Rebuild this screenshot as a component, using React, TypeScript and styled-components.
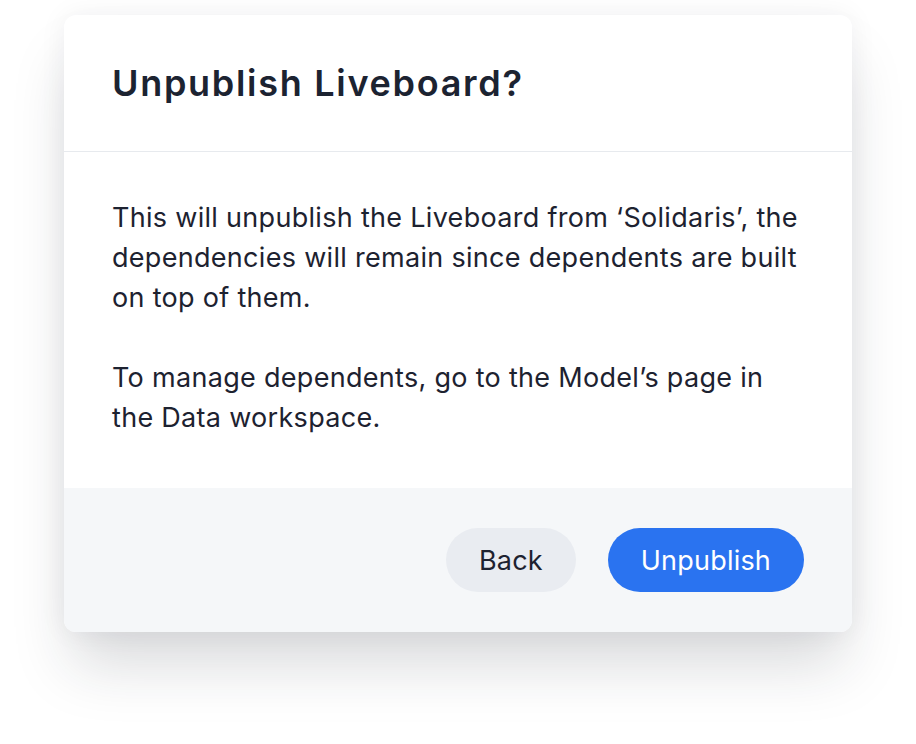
import React from "react";
import styled, { createGlobalStyle } from "styled-components";

const Global = createGlobalStyle`
  html, body { margin: 0; padding: 0; background: #ffffff; }
  body { font-family: Inter, "Noto Sans", sans-serif; -webkit-font-smoothing: antialiased; }
  * { box-sizing: border-box; }
`;

const Page = styled.div`
  width: 916px;
  height: 744px;
  padding: 15px 64px 0 64px;
  background: #ffffff;
`;

const Card = styled.div`
  width: 788px;
  background: #ffffff;
  border-radius: 12px;
  overflow: hidden;
  box-shadow: 0 40px 60px -8px rgba(30, 35, 45, 0.17), 0 0 28px rgba(30, 35, 45, 0.06);
`;

const Header = styled.div`
  height: 137px;
  padding: 0 48px;
  display: flex;
  align-items: center;
  border-bottom: 1px solid #e7eaee;
`;

const Title = styled.h1`
  margin: 0;
  font-size: 36px;
  font-weight: 600;
  color: #1c2331;
  letter-spacing: 1.7px;
`;

const Body = styled.div`
  height: 336px;
  padding: 46px 48px 0 48px;
  display: flex;
  flex-direction: column;
  gap: 40px;
`;

const Paragraph = styled.p`
  margin: 0;
  font-size: 27px;
  line-height: 40px;
  letter-spacing: 0.3px;
  color: #1d2230;
  font-weight: 400;
`;

const Footer = styled.div`
  height: 144px;
  background: #f5f7f9;
  display: flex;
  justify-content: flex-end;
  align-items: center;
  gap: 32px;
  padding: 0 48px;
`;

const Button = styled.button<{ $primary?: boolean }>`
  height: 64px;
  padding: 0 33px;
  border: none;
  border-radius: 32px;
  font-family: Inter, "Noto Sans", sans-serif;
  font-size: 27px;
  letter-spacing: 0.2px;
  font-weight: 400;
  background: ${(p) => (p.$primary ? "#2a73f0" : "#e9ecf1")};
  color: ${(p) => (p.$primary ? "#ffffff" : "#1d2230")};
  cursor: pointer;
`;

export default function App() {
  return (
    <>
      <Global />
      <Page>
        <Card>
          <Header>
            <Title>Unpublish Liveboard?</Title>
          </Header>
          <Body>
            <Paragraph>
              This will unpublish the Liveboard from ‘Solidaris’, the dependencies will remain since dependents are
              built on top of them.
            </Paragraph>
            <Paragraph>To manage dependents, go to the Model’s page in the Data workspace.</Paragraph>
          </Body>
          <Footer>
            <Button>Back</Button>
            <Button $primary>Unpublish</Button>
          </Footer>
        </Card>
      </Page>
    </>
  );
}
